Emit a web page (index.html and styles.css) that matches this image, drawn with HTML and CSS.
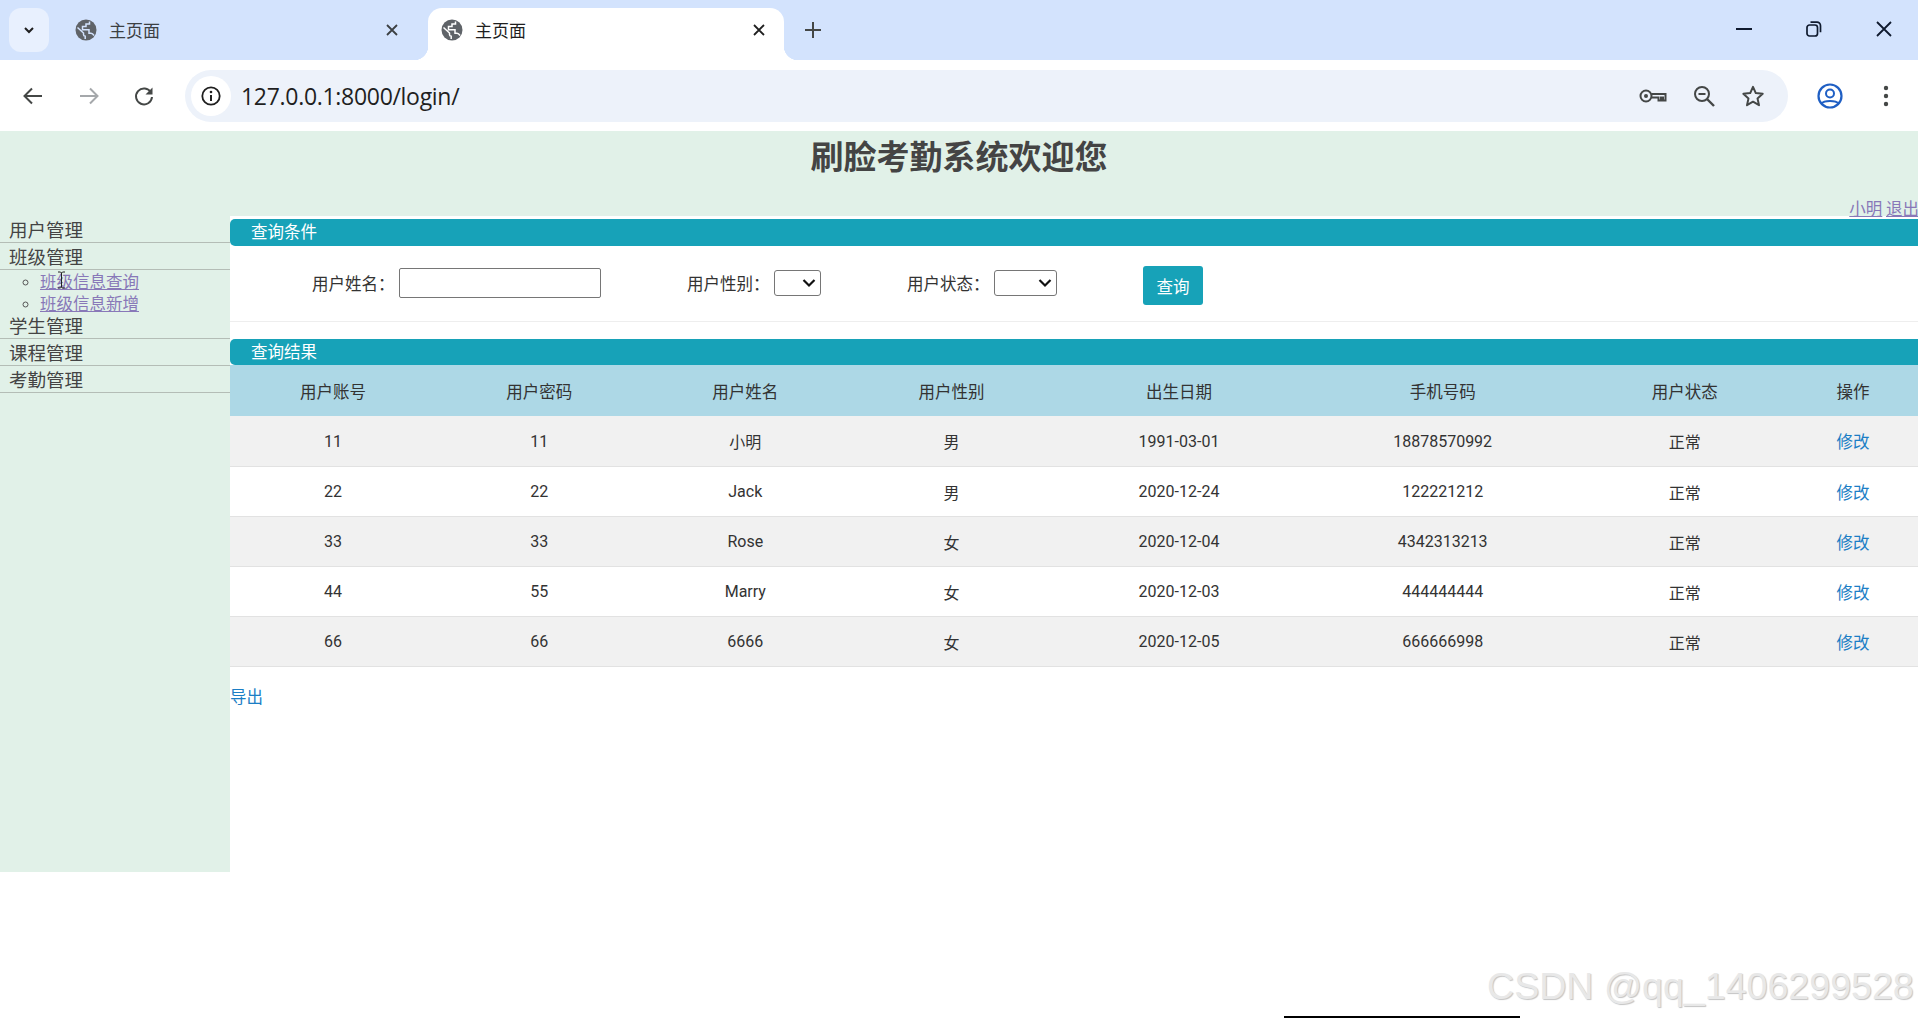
FILE: index.html
```html
<!DOCTYPE html>
<html lang="zh-CN">
<head>
<meta charset="utf-8">
<title>主页面</title>
<link rel="stylesheet" href="styles.css">
</head>
<body>
<header class="browser">
  <div class="tabstrip">
    <button class="tab-search" type="button" aria-label="tabs">
      <svg width="16" height="16" viewBox="0 0 16 16"><path d="M4 6l4 4 4-4" fill="none" stroke="#1f1f1f" stroke-width="2"/></svg>
    </button>
    <div class="tab">
      <svg class="globe" width="24" height="24" viewBox="0 0 24 24"><circle cx="12" cy="12" r="10.500" fill="#5f6368"/><path class="globe-gap" d="M3.500 9.500L9.500 15v1.500c0 1 .8 1.700 1.700 1.700V21M20 17.500c-.8-1.300-1.700-2.200-3-2.200h-2v-3.500H8.500V8.500h3.500V6h3.500V3.500" fill="none" stroke-width="1.500"/></svg>
      <span class="tab-title">主页面</span>
      <svg class="tab-close" width="14" height="14" viewBox="0 0 14 14"><path d="M2 2l10 10M12 2L2 12" stroke="#3c4043" stroke-width="1.8"/></svg>
    </div>
    <div class="tab tab-active">
      <svg class="globe" width="24" height="24" viewBox="0 0 24 24"><circle cx="12" cy="12" r="10.500" fill="#5f6368"/><path class="globe-gap" d="M3.500 9.500L9.500 15v1.500c0 1 .8 1.700 1.700 1.700V21M20 17.500c-.8-1.300-1.700-2.200-3-2.200h-2v-3.500H8.500V8.500h3.500V6h3.500V3.500" fill="none" stroke-width="1.500"/></svg>
      <span class="tab-title">主页面</span>
      <svg class="tab-close" width="14" height="14" viewBox="0 0 14 14"><path d="M2 2l10 10M12 2L2 12" stroke="#1f1f1f" stroke-width="1.8"/></svg>
    </div>
    <svg class="new-tab" width="18" height="18" viewBox="0 0 18 18"><path d="M9 1v16M1 9h16" stroke="#444746" stroke-width="2"/></svg>
    <div class="window-controls">
      <svg width="16" height="16" viewBox="0 0 16 16"><path d="M0 8h16" stroke="#0f1a2e" stroke-width="2"/></svg>
      <svg width="16" height="16" viewBox="0 0 16 16"><rect x="1" y="4" width="10.500" height="11" rx="2.500" fill="none" stroke="#0f1a2e" stroke-width="1.700"/><path d="M4.500 1.200h6.500a3.500 3.500 0 0 1 3.500 3.500v6.500" fill="none" stroke="#0f1a2e" stroke-width="1.700"/></svg>
      <svg width="16" height="16" viewBox="0 0 16 16"><path d="M1 1l14 14M15 1L1 15" stroke="#0f1a2e" stroke-width="1.800"/></svg>
    </div>
  </div>
  <div class="toolbar">
    <svg class="nav-icon nav-back" width="22" height="22" viewBox="0 0 22 22"><path d="M20 11H3M10 3.500L2.500 11l7.500 7.500" fill="none" stroke="#444746" stroke-width="2"/></svg>
    <svg class="nav-icon nav-forward" width="22" height="22" viewBox="0 0 22 22"><path d="M2 11h17M12 3.500l7.500 7.500-7.500 7.500" fill="none" stroke="#a5a8ab" stroke-width="2"/></svg>
    <svg class="nav-icon nav-reload" width="22" height="22" viewBox="0 0 22 22"><path d="M18 7.500A8 8 0 1 0 19 12" fill="none" stroke="#444746" stroke-width="2"/><path d="M19.500 2.500v7h-7z" fill="#444746"/></svg>
    <div class="omnibox">
      <span class="site-info">
        <svg width="22" height="22" viewBox="0 0 22 22"><circle cx="11" cy="11" r="8.700" fill="none" stroke="#1f1f1f" stroke-width="1.800"/><path d="M11 10v6" stroke="#1f1f1f" stroke-width="2"/><circle cx="11" cy="7" r="1.300" fill="#1f1f1f"/></svg>
      </span>
      <span class="url">127.0.0.1:8000/login/</span>
      <span class="omni-icons">
        <svg width="28" height="16" viewBox="0 0 28 16"><circle cx="7" cy="8" r="5.500" fill="none" stroke="#444746" stroke-width="2"/><circle cx="7" cy="8" r="2" fill="#444746"/><path d="M12.500 6h14v6.500h-2.500v-3h-2v3h-2.500v-3h-7" fill="none" stroke="#444746" stroke-width="2"/></svg>
        <svg width="24" height="24" viewBox="0 0 24 24"><circle cx="10" cy="10" r="7" fill="none" stroke="#444746" stroke-width="2"/><path d="M15 15l7 7" stroke="#444746" stroke-width="2.400"/><path d="M6.500 10h7" stroke="#444746" stroke-width="2"/></svg>
        <svg width="24" height="24" viewBox="0 0 24 24"><path d="M12 2.800l2.800 6.300 6.900.7-5.200 4.600 1.500 6.800-6-3.500-6 3.500 1.500-6.800-5.200-4.600 6.900-.7z" fill="none" stroke="#444746" stroke-width="2" stroke-linejoin="round"/></svg>
      </span>
    </div>
    <svg class="profile" width="26" height="26" viewBox="0 0 26 26"><circle cx="13" cy="13" r="11.500" fill="none" stroke="#1f5fc4" stroke-width="2.200"/><circle cx="13" cy="10.500" r="4" fill="none" stroke="#1f5fc4" stroke-width="2"/><path d="M4.500 20.500c2.500-3.500 14.500-3.500 17 0" fill="none" stroke="#1f5fc4" stroke-width="2"/></svg>
    <svg class="menu-dots" width="6" height="22" viewBox="0 0 6 22"><circle cx="3" cy="3" r="2.200" fill="#444746"/><circle cx="3" cy="11" r="2.200" fill="#444746"/><circle cx="3" cy="19" r="2.200" fill="#444746"/></svg>
  </div>
</header>

<div class="page">
  <div class="page-head">
    <h1 class="page-title">刷脸考勤系统欢迎您</h1>
    <div class="user-links"><a class="visited" href="#">小明</a> <a class="visited" href="#">退出</a></div>
  </div>
  <div class="page-body">
    <nav class="sidebar">
      <div class="menu-item">用户管理</div>
      <div class="menu-item">班级管理</div>
      <ul class="submenu">
        <li><a class="visited" href="#">班级信息查询</a></li>
        <li><a class="visited" href="#">班级信息新增</a></li>
      </ul>
      <div class="menu-item">学生管理</div>
      <div class="menu-item">课程管理</div>
      <div class="menu-item">考勤管理</div>
      <svg class="ibeam" width="9" height="18" viewBox="0 0 9 18"><path d="M1 1h2.500L4.500 2l1-1H8M4.500 2v14M1 17h2.500l1-1 1 1H8" fill="none" stroke="#222" stroke-width="1"/></svg>
    </nav>
    <main class="content">
      <div class="bar">查询条件</div>
      <form class="search-form">
        <label class="field-label">用户姓名：</label>
        <input class="text-input" type="text">
        <label class="field-label field-next">用户性别：</label>
        <span class="select-wrap">
          <select class="select select-sex"><option></option></select>
          <svg class="select-arrow" width="14" height="10" viewBox="0 0 14 10"><path d="M1.500 2l5.500 5.500L12.500 2" fill="none" stroke="#111" stroke-width="2.200"/></svg>
        </span>
        <label class="field-label field-next">用户状态：</label>
        <span class="select-wrap">
          <select class="select select-state"><option></option></select>
          <svg class="select-arrow" width="14" height="10" viewBox="0 0 14 10"><path d="M1.500 2l5.500 5.500L12.500 2" fill="none" stroke="#111" stroke-width="2.200"/></svg>
        </span>
        <button class="query-btn" type="button">查询</button>
      </form>
      <div class="bar bar-result">查询结果</div>
      <table class="result-table">
        <colgroup>
          <col class="col-std"><col class="col-std"><col class="col-std"><col class="col-std">
          <col class="col-date"><col class="col-phone"><col class="col-std"><col class="col-op">
        </colgroup>
        <thead>
          <tr><th>用户账号</th><th>用户密码</th><th>用户姓名</th><th>用户性别</th><th>出生日期</th><th>手机号码</th><th>用户状态</th><th>操作</th></tr>
        </thead>
        <tbody>
          <tr><td>11</td><td>11</td><td>小明</td><td>男</td><td>1991-03-01</td><td>18878570992</td><td>正常</td><td><a class="link" href="#">修改</a></td></tr>
          <tr><td>22</td><td>22</td><td>Jack</td><td>男</td><td>2020-12-24</td><td>122221212</td><td>正常</td><td><a class="link" href="#">修改</a></td></tr>
          <tr><td>33</td><td>33</td><td>Rose</td><td>女</td><td>2020-12-04</td><td>4342313213</td><td>正常</td><td><a class="link" href="#">修改</a></td></tr>
          <tr><td>44</td><td>55</td><td>Marry</td><td>女</td><td>2020-12-03</td><td>444444444</td><td>正常</td><td><a class="link" href="#">修改</a></td></tr>
          <tr><td>66</td><td>66</td><td>6666</td><td>女</td><td>2020-12-05</td><td>666666998</td><td>正常</td><td><a class="link" href="#">修改</a></td></tr>
        </tbody>
      </table>
      <a class="link export" href="#">导出</a>
    </main>
  </div>
</div>

<div class="watermark">CSDN @qq_1406299528</div>
<div class="taskbar-line"></div>
</body>
</html>
```
FILE: styles.css
```css
* { box-sizing: border-box; }
html, body { margin: 0; padding: 0; height: 100%; overflow: hidden; background: #fff; }
body { font-family: "Roboto", "Noto Sans CJK SC", sans-serif; font-size: 16px; color: #333; position: relative; }

/* Browser chrome */
.browser { height: 131px; display: flex; flex-direction: column; }
.tabstrip { height: 60px; background: #d3e3fd; display: flex; align-items: flex-start; padding: 8px 0 0 9px; }
.tab-search { width: 40px; height: 44px; border: 0; border-radius: 12px; background: #e8f0fe; display: flex; align-items: center; justify-content: center; padding: 0; }
.tab { width: 364px; height: 52px; margin-left: 15px; display: flex; align-items: center; padding: 0 29px 8px 10px; position: relative; border-radius: 14px 14px 0 0; color: #3c4043; flex: none; }
.tab + .tab { margin-left: 0; }
.tab-active { width: 356px; background: #fff; color: #1f1f1f; padding: 0 18px 8px 12px; }
.tab-active::before, .tab-active::after { content: ""; position: absolute; bottom: 0; width: 14px; height: 14px; }
.tab-active::before { left: -14px; background: radial-gradient(circle at 0 0, #d3e3fd 14px, #fff 14.500px); }
.tab-active::after { right: -14px; background: radial-gradient(circle at 100% 0, #d3e3fd 14px, #fff 14.500px); }
.globe { flex: none; }
.globe-gap { stroke: #d3e3fd; }
.tab-active .globe-gap { stroke: #fff; }
.tab-title { margin: -2px 0 0 11px; font-size: 17px; font-family: "Noto Sans CJK SC", sans-serif; flex: 1; }
.tab-close { flex: none; }
.new-tab { margin: 13px 0 0 20px; flex: none; }
.window-controls { margin-left: auto; display: flex; gap: 54px; padding: 13px 26px 0 0; }
.toolbar { height: 71px; background: #fff; display: flex; align-items: center; padding: 0 0 0 22px; position: relative; }
.nav-icon { flex: none; }
.nav-back { margin-right: 34px; }
.nav-forward { margin-right: 33px; }
.nav-reload { margin-right: 30px; }
.omnibox { width: 1603px; height: 52px; border-radius: 26px; background: #edf2fa; display: flex; align-items: center; padding-left: 6px; flex: none; }
.site-info { width: 40px; height: 40px; border-radius: 50%; background: #fff; display: flex; align-items: center; justify-content: center; flex: none; }
.url { margin-left: 10px; font-family: "Open Sans", sans-serif; font-size: 23px; letter-spacing: -0.300px; color: #1f1f1f; }
.omni-icons { margin-left: auto; display: flex; align-items: center; gap: 25px; padding-right: 23px; }
.profile { margin-left: 29px; flex: none; }
.menu-dots { margin-left: 40px; flex: none; }

/* Page */
.page-head { height: 85px; background: #e1f1e8; position: relative; }
.page-title { margin: 0; padding-top: 5px; text-align: center; font-size: 33px; line-height: 44px; font-weight: 700; color: #444; font-family: "Liberation Sans", "Noto Sans CJK SC", sans-serif; }
.user-links { position: absolute; right: -1px; bottom: -3px; line-height: 22px; font-size: 16.500px; white-space: nowrap; font-family: "Noto Sans CJK SC", sans-serif; }
.visited { color: #8878b8; text-decoration: underline; }
.page-body { display: flex; align-items: flex-start; }
.sidebar { width: 230px; height: 656px; background: #e1f1e8; flex: none; position: relative; }
.menu-item { height: 27px; line-height: 30px; padding-left: 9px; font-size: 18.500px; color: #444; border-bottom: 1px solid #b4bdb6; }
.submenu { margin: 0 0 -2px; padding: 0 0 0 40px; list-style: circle; color: #555; }
.submenu li { height: 22px; line-height: 22px; font-size: 16.500px; padding-top: 2px; }
.ibeam { position: absolute; left: 57px; top: 55px; }
.content { flex: 1; min-width: 0; padding-top: 3px; background: #fff; }
.bar { height: 27px; line-height: 28px; padding-left: 21px; background: #17a2b8; color: #fff; border-radius: 5px 0 0 5px; font-size: 16.500px; }
.bar-result { margin-top: 17px; height: 26px; }
.search-form { height: 76px; padding: 0 0 2px 82px; display: flex; align-items: center; border-bottom: 1px solid #eee; }
.field-label { width: 87px; flex: none; color: #333; font-size: 16.500px; white-space: nowrap; }
.field-next { margin-left: 86px; }
.text-input { width: 202px; height: 30px; flex: none; border: 1px solid #767676; border-radius: 2px; background: #fff; }
.select-wrap { position: relative; display: flex; flex: none; }
.select { height: 26px; border: 1px solid #767676; border-radius: 3px; background: #fff; appearance: none; }
.select-sex { width: 47px; }
.select-state { width: 63px; }
.select-arrow { position: absolute; right: 5px; top: 8px; pointer-events: none; }
.query-btn { width: 60px; height: 39px; margin: 6px 0 0 86px; flex: none; border: 0; border-radius: 3px; background: #17a2b8; color: #fff; font: inherit; font-size: 16.500px; padding: 0; }
.result-table { width: 100%; table-layout: fixed; border-collapse: collapse; }
.col-std { width: 206px; }
.col-date { width: 249px; }
.col-phone { width: 278px; }
.col-op { width: 130px; }
.result-table th { height: 51px; background: #add8e6; font-weight: 400; font-size: 16.500px; color: #333; text-align: center; padding: 0; }
.result-table td { height: 50px; text-align: center; padding: 1px 0 0; border-bottom: 1px solid #e2e2e2; color: #333; }
.result-table tbody tr:nth-child(odd) td { background: #f1f1f1; }
.link { color: #1b7ec5; text-decoration: none; font-size: 16.500px; }
.export { display: block; margin-top: 20px; line-height: 22px; }

/* Overlay on the screenshot */
.watermark { position: absolute; left: 1487px; top: 963px; font-family: "Liberation Sans", sans-serif; font-size: 37.600px; line-height: 46px; white-space: nowrap; color: #e8e8e8; text-shadow: 1px 1px 1px #c4c4c4; }
.taskbar-line { position: absolute; left: 1284px; bottom: 0; width: 236px; height: 2px; background: #000; }
```
